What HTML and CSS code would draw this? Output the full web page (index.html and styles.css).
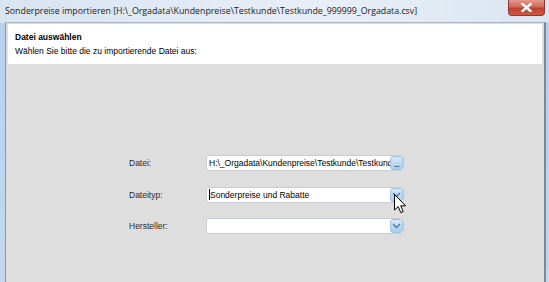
FILE: index.html
```html
<!DOCTYPE html>
<html lang="de">
  <head>
    <meta charset="utf-8">
    <title>Sonderpreise importieren</title>
    <link rel="stylesheet" href="styles.css">
  </head>
  <body>
    <div class="window">
      <div class="titlebar">
        <span class="title">Sonderpreise importieren [H:\_Orgadata\Kundenpreise\Testkunde\Testkunde_999999_Orgadata.csv]</span>
        <a href="#" class="close-btn">
          <svg width="11" height="9" viewBox="0 0 11 9">
            <path d="M1.5 1 L9.5 8 M9.5 1 L1.5 8" stroke="#fff" stroke-width="2.4" stroke-linecap="square"/>
          </svg>
        </a>
      </div>
      <div class="client">
        <div class="header">
          <div class="header-title">Datei auswählen</div>
          <div class="header-sub">Wählen Sie bitte die zu importierende Datei aus:</div>
        </div>
        <div class="form">
          <label class="field-label">Datei:</label>
          <div class="field">
            <span class="field-text">H:\_Orgadata\Kundenpreise\Testkunde\Testkunde_999999_Orgadata.csv</span>
            <span class="field-btn dots">...</span>
          </div>

          <label class="field-label">Dateityp:</label>
          <div class="field">
            <span class="caret"></span>
            <span class="field-text">Sonderpreise und Rabatte</span>
            <span class="field-btn">
              <svg width="9" height="6" viewBox="0 0 9 6"><path d="M1 1 L4.5 4.5 L8 1" fill="none" stroke="#4a7aa8" stroke-width="1.4"/></svg>
            </span>
            <svg class="pointer" width="13" height="20" viewBox="0 0 13 20">
              <path d="M0.5 0.5 L0.5 16 L4.2 12.6 L6.8 18.6 L9.2 17.6 L6.7 11.8 L11.6 11.8 Z" fill="#fff" stroke="#000" stroke-width="1"/>
            </svg>
          </div>

          <label class="field-label">Hersteller:</label>
          <div class="field">
            <span class="field-text"></span>
            <span class="field-btn">
              <svg width="9" height="6" viewBox="0 0 9 6"><path d="M1 1 L4.5 4.5 L8 1" fill="none" stroke="#4a7aa8" stroke-width="1.4"/></svg>
            </span>
          </div>
        </div>
      </div>
    </div>
  </body>
</html>
```

FILE: styles.css
```css
* {
  box-sizing: border-box
}

body {
  margin: 0;
  padding: 0;
  width: 549px;
  height: 282px;
  overflow: hidden;
  font-family: 'Liberation Sans', Arial, sans-serif;
}

a {
  text-decoration: none
}

.window {
  height: 282px;
  display: flex;
  flex-direction: column;
  padding: 0 3px 0 5px;
  background: linear-gradient(to bottom, #dfe8f3 0, #e9eff7 22px, #b8d0ec 23px, #c4d8f0 100%);
}

.titlebar {
  height: 22px;
  display: flex;
  align-items: flex-start;
  margin: 0 -3px 0 -5px;
  padding-left: 5px;
  background: linear-gradient(to right, #d9e4f1, #e8eef6 60%, #dbe5f1);
}

.title {
  font-family: 'Open Sans', 'Noto Sans', sans-serif;
  font-size: 8.8px;
  color: #1a1a1a;
  line-height: 22px;
  white-space: nowrap;
}

.close-btn {
  margin-left: auto;
  margin-right: 4px;
  width: 37px;
  height: 16px;
  display: flex;
  align-items: center;
  justify-content: center;
  border: 1px solid #8a3a32;
  border-top: none;
  border-radius: 0 0 4px 4px;
  background: linear-gradient(to bottom, #e39a8c 0, #d26a58 45%, #c0412e 55%, #cc5a44 100%);
}

.client {
  flex: 1;
  border-left: 1px solid #8c97a4;
  border-right: 2px solid #7d8894;
  border-top: 1px solid #a9b3bf;
  background: #dedede;
  padding: 1px 2px 0 2px;
}

.header {
  height: 40px;
  background: #fff;
  padding: 8px 0 0 7px;
  font-size: 8.5px;
  color: #000;
}

.header-title {
  font-weight: bold;
  line-height: 11px;
}

.header-sub {
  margin-top: 3px;
  line-height: 11px;
}

.form {
  display: grid;
  grid-template-columns: 77px 198px;
  grid-auto-rows: 16px;
  row-gap: 15.5px;
  padding: 91px 0 0 121px;
  font-size: 8.5px;
  align-items: center;
}

.field-label {
  color: #2a2a2a;
}

.field {
  position: relative;
  height: 16px;
  display: flex;
  align-items: center;
  background: #fff;
  border: 1px solid #c9cdd2;
  border-radius: 2px;
  padding-left: 2px;
}

.field-text {
  flex: 1;
  white-space: nowrap;
  overflow: hidden;
  color: #000;
}

.field-btn {
  width: 13px;
  height: 14px;
  flex: none;
  display: flex;
  align-items: center;
  justify-content: center;
  border-radius: 3px;
  background: linear-gradient(to bottom, #d6e8f8, #a9cdee);
  border: 1px solid #9fc2e2;
}

.field-btn.dots {
  align-items: flex-end;
  font-size: 8px;
  line-height: 9px;
  color: #2a4d78;
  font-weight: bold;
  letter-spacing: -0.5px;
}

.caret {
  width: 1px;
  height: 11px;
  background: #000;
  flex: none;
}

.pointer {
  position: absolute;
  left: 187px;
  top: 6px;
}
```
